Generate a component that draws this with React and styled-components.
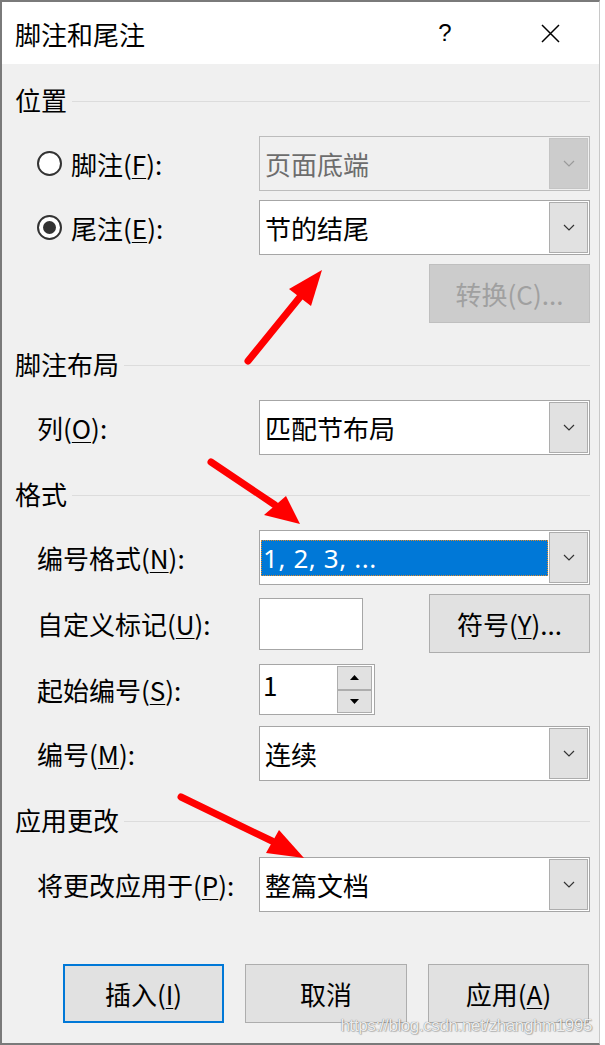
import React from "react";
import styled, { createGlobalStyle } from "styled-components";

const GlobalStyle = createGlobalStyle`
  html, body { margin: 0; padding: 0; background: #ffffff; }
  body { font-family: "Noto Sans CJK SC", "Noto Sans", sans-serif; }
`;

const Window = styled.div`
  position: relative;
  width: 597px;
  height: 1041px;
  border: 2px solid #7a7a7a;
  border-right: 1px solid #c8c8c8;
  background: #f0f0f0;
  display: flex;
  flex-direction: column;
  font-size: 26px;
  color: #000;
`;

const TitleBar = styled.div`
  height: 62px;
  background: #fff;
  display: flex;
  align-items: center;
  padding-left: 13px;
`;

const Title = styled.div`
  flex: 1;
  line-height: 1;
  padding-top: 2px;
`;

const TitleButton = styled.div`
  width: 40px;
  display: flex;
  justify-content: center;
  align-items: center;
  font-family: "Liberation Sans", sans-serif;
  font-size: 24px;
  margin-right: ${p => p.$mr}px;
`;

const Body = styled.div`
  flex: 1;
  padding: 0 9px 0 13px;
  display: flex;
  flex-direction: column;
`;

const Heading = styled.div`
  height: 36px;
  margin-top: ${p => p.$mt}px;
  display: flex;
  align-items: center;
  gap: 5px;
  line-height: 1;
  &::after {
    content: "";
    flex: 1;
    height: 1px;
    background: #dcdcdc;
    margin-top: 2px;
  }
`;

const Row = styled.div`
  display: flex;
  align-items: center;
  height: ${p => p.$h || 55}px;
  margin-top: ${p => p.$mt}px;
  padding-left: 22px;
`;

const Label = styled.div`
  flex: 0 0 222px;
  display: flex;
  align-items: center;
  gap: 9px;
  line-height: 1;
  white-space: nowrap;
  u {
    text-decoration: underline;
    text-underline-offset: 3px;
    text-decoration-thickness: 1px;
  }
`;

const Radio = styled.span`
  width: 25px;
  height: 25px;
  box-sizing: border-box;
  border-radius: 50%;
  border: 2px solid #333;
  background: #fff;
  display: inline-flex;
  align-items: center;
  justify-content: center;
  &::after {
    content: "";
    width: 13px;
    height: 13px;
    border-radius: 50%;
    background: ${p => (p.$checked ? "#333" : "transparent")};
  }
`;

const Select = styled.div`
  width: 331px;
  height: 55px;
  box-sizing: border-box;
  border: 1px solid ${p => (p.$disabled ? "#bcbcbc" : "#a6a6a6")};
  background: ${p => (p.$disabled ? "#f0f0f0" : "#fff")};
  display: flex;
  align-items: stretch;
`;

const SelectValue = styled.div`
  flex: 1;
  display: flex;
  align-items: center;
  padding-left: 5px;
  line-height: 1;
  color: ${p => (p.$disabled ? "#6d6d6d" : "#000")};
`;

const SelectedValue = styled.div`
  flex: 1;
  display: flex;
  align-items: center;
  margin: 9px 0 8px 1px;
  padding-left: 2px;
  background: #0078d7;
  color: #fff;
  outline: 1px dotted #e08a2a;
  outline-offset: -1px;
  line-height: 1;
  font-family: "Noto Sans", sans-serif;
  letter-spacing: 0.6px;
`;

const ArrowBox = styled.div`
  width: 39px;
  margin: 1px;
  box-sizing: border-box;
  border: 1px solid ${p => (p.$disabled ? "#c4c4c4" : "#adadad")};
  background: ${p => (p.$disabled ? "#cccccc" : "#e1e1e1")};
  display: flex;
  align-items: center;
  justify-content: center;
`;

const Button = styled.div`
  width: ${p => p.$w || 161}px;
  height: 59px;
  box-sizing: border-box;
  border: ${p => (p.$default ? "2px solid #0078d7" : p.$disabled ? "1px solid #bfbfbf" : "1px solid #adadad")};
  background: ${p => (p.$disabled ? "#cccccc" : "#e1e1e1")};
  color: ${p => (p.$disabled ? "#a0a0a0" : "#000")};
  display: flex;
  align-items: center;
  justify-content: center;
  line-height: 1;
  margin-left: ${p => (p.$auto ? "auto" : "0")};
  u {
    text-decoration: underline;
    text-underline-offset: 3px;
    text-decoration-thickness: 1px;
  }
`;

const ButtonRow = styled.div`
  display: flex;
  justify-content: flex-end;
  gap: 21px;
  margin-top: ${p => p.$mt}px;
  padding-right: 1px;
`;

const TextBox = styled.div`
  width: 104px;
  height: 52px;
  box-sizing: border-box;
  border: 1px solid #a6a6a6;
  background: #fff;
`;

const Spinner = styled.div`
  width: 116px;
  height: 51px;
  box-sizing: border-box;
  border: 1px solid #a6a6a6;
  background: #fff;
  display: flex;
`;

const SpinValue = styled.div`
  flex: 1;
  padding-left: 3px;
  padding-top: 7px;
  line-height: 1;
`;

const SpinColumn = styled.div`
  width: 35px;
  margin: 1px 2px 1px 0;
  display: flex;
  flex-direction: column;
`;

const SpinButton = styled.div`
  flex: 1;
  box-sizing: border-box;
  border: 1px solid #adadad;
  background: #e1e1e1;
  display: flex;
  align-items: center;
  justify-content: center;
`;

const Overlay = styled.svg`
  position: absolute;
  left: -2px;
  top: -2px;
  width: 605px;
  height: 1045px;
  pointer-events: none;
`;

const Watermark = styled.div`
  position: absolute;
  right: 7px;
  bottom: 7px;
  font-family: "Liberation Sans", sans-serif;
  font-size: 17px;
  color: rgba(255, 255, 255, 0.9);
  text-shadow: 0 0 1px rgba(80, 80, 80, 0.9), 1px 1px 1px rgba(0, 0, 0, 0.2);
  letter-spacing: -0.4px;
`;

const Chevron = ({ disabled }) => (
  <svg width="12" height="7" viewBox="0 0 12 7">
    <polyline points="1,1 6,6 11,1" fill="none" stroke={disabled ? "#9a9a9a" : "#333"} strokeWidth="1.2" />
  </svg>
);

const Triangle = ({ up }) => (
  <svg width="9" height="5" viewBox="0 0 9 5">
    <polygon points={up ? "0,5 9,5 4.5,0" : "0,0 9,0 4.5,5"} fill="#000" />
  </svg>
);

const Dropdown = ({ value, disabled, selected }) => (
  <Select $disabled={disabled}>
    {selected ? <SelectedValue>{value}</SelectedValue> : <SelectValue $disabled={disabled}>{value}</SelectValue>}
    <ArrowBox $disabled={disabled}>
      <Chevron disabled={disabled} />
    </ArrowBox>
  </Select>
);

const arrows = [
  { tail: [248, 361], mid: [300, 297], head: "322,270 289,289 311,306" },
  { tail: [211, 462], mid: [275, 505], head: "300,524 264,515 286,496" },
  { tail: [181, 797], mid: [272, 841], head: "304,858 266,853 279,830" },
];

export default function App() {
  return (
    <>
      <GlobalStyle />
      <Window>
        <TitleBar>
          <Title>脚注和尾注</Title>
          <TitleButton $mr={65}>?</TitleButton>
          <TitleButton $mr={29}>
            <svg width="19" height="19" viewBox="0 0 19 19">
              <path d="M1 1L18 18M18 1L1 18" stroke="#000" strokeWidth="1.5" />
            </svg>
          </TitleButton>
        </TitleBar>
        <Body>
          <Heading $mt={18}>位置</Heading>
          <Row $mt={18}>
            <Label>
              <Radio />
              <span>脚注(<u>F</u>):</span>
            </Label>
            <Dropdown value="页面底端" disabled />
          </Row>
          <Row $mt={9}>
            <Label>
              <Radio $checked />
              <span>尾注(<u>E</u>):</span>
            </Label>
            <Dropdown value="节的结尾" />
          </Row>
          <Row $mt={9} $h={59}>
            <Button $disabled $auto>转换(C)...</Button>
          </Row>

          <Heading $mt={23}>脚注布局</Heading>
          <Row $mt={18}>
            <Label>
              <span>列(<u>O</u>):</span>
            </Label>
            <Dropdown value="匹配节布局" />
          </Row>

          <Heading $mt={21}>格式</Heading>
          <Row $mt={18}>
            <Label>
              <span>编号格式(<u>N</u>):</span>
            </Label>
            <Dropdown value="1, 2, 3, ..." selected />
          </Row>
          <Row $mt={9} $h={59}>
            <Label>
              <span>自定义标记(<u>U</u>):</span>
            </Label>
            <TextBox />
            <Button $auto>
              <span>符号(<u>Y</u>)...</span>
            </Button>
          </Row>
          <Row $mt={11} $h={51}>
            <Label>
              <span>起始编号(<u>S</u>):</span>
            </Label>
            <Spinner>
              <SpinValue>1</SpinValue>
              <SpinColumn>
                <SpinButton><Triangle up /></SpinButton>
                <SpinButton><Triangle /></SpinButton>
              </SpinColumn>
            </Spinner>
          </Row>
          <Row $mt={11}>
            <Label>
              <span>编号(<u>M</u>):</span>
            </Label>
            <Dropdown value="连续" />
          </Row>

          <Heading $mt={21}>应用更改</Heading>
          <Row $mt={19}>
            <Label>
              <span>将更改应用于(<u>P</u>):</span>
            </Label>
            <Dropdown value="整篇文档" />
          </Row>

          <ButtonRow $mt={52}>
            <Button $default>
              <span>插入(<u>I</u>)</span>
            </Button>
            <Button $w={162}>取消</Button>
            <Button>
              <span>应用(<u>A</u>)</span>
            </Button>
          </ButtonRow>
        </Body>
        <Watermark>https://blog.csdn.net/zhanghm1995</Watermark>
        <Overlay viewBox="0 0 605 1045">
          {arrows.map((a, i) => (
            <g key={i}>
              <line
                x1={a.tail[0]}
                y1={a.tail[1]}
                x2={a.mid[0]}
                y2={a.mid[1]}
                stroke="#ff0000"
                strokeWidth="7"
                strokeLinecap="round"
              />
              <polygon points={a.head} fill="#ff0000" />
            </g>
          ))}
        </Overlay>
      </Window>
    </>
  );
}
